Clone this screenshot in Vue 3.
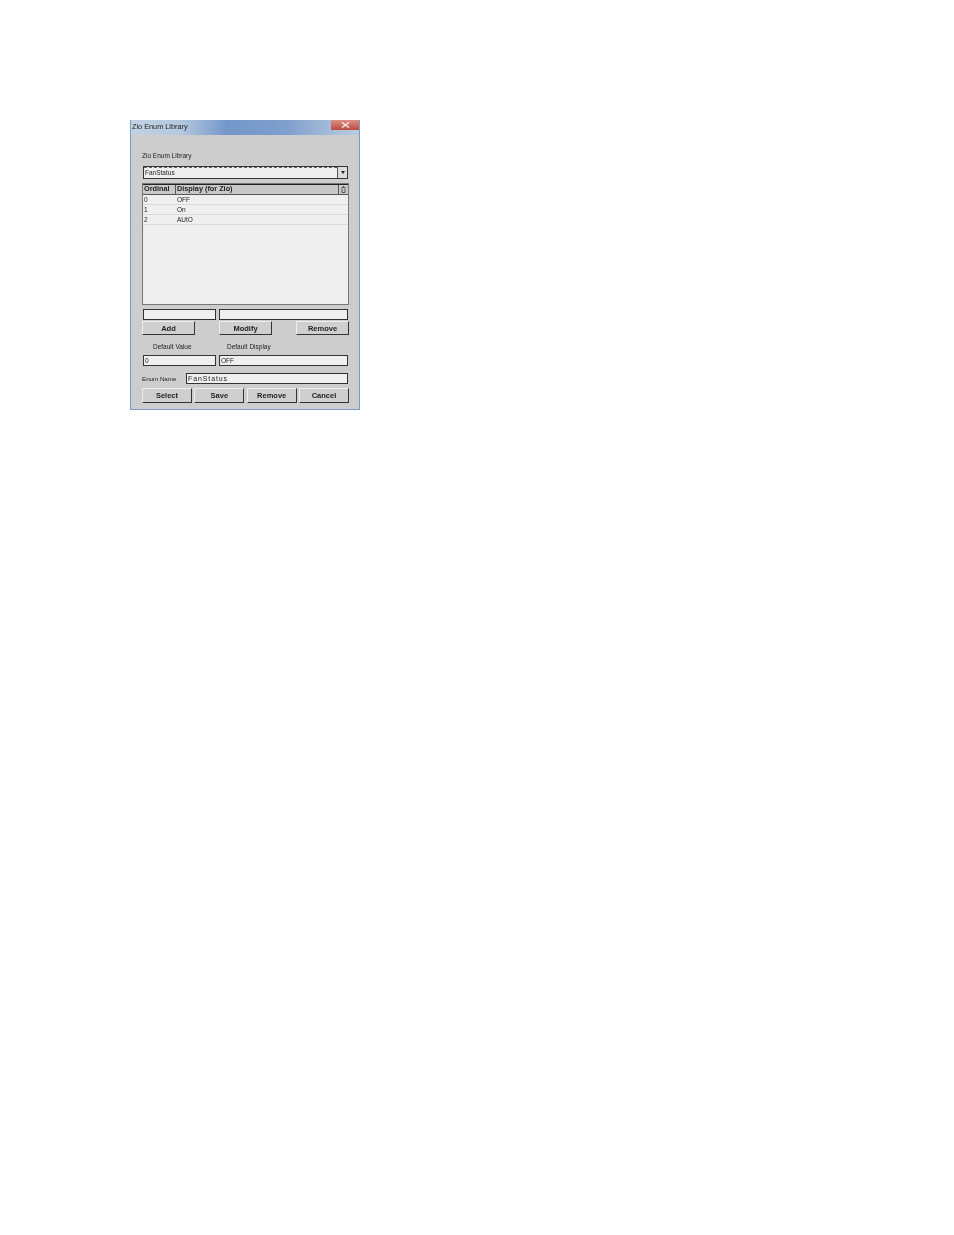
<template>
  <div class="page">
    <div class="dialog">
      <div class="titlebar">
        <span class="title">Zio Enum Library</span>
        <span class="close"><svg width="9" height="6" viewBox="0 0 9 6"><path d="M1 0.5L8 5.5M8 0.5L1 5.5" stroke="#f4e6e4" stroke-width="1.5" /></svg></span>
      </div>
      <div class="body">
        <div class="lib-label">Zio Enum Library</div>
        <div class="combo">
          <span class="combo-text">FanStatus</span>
          <span class="combo-btn"><i class="arrow"></i></span>
        </div>
        <div class="table">
          <div class="thead">
            <div class="th c1">Ordinal</div>
            <div class="th c2">Display (for Zio)</div>
            <div class="th c3"><svg width="5" height="7" viewBox="0 0 5 7"><path d="M0.5 1.5H4.5M1 2.5V6.5H4V2.5M2 0.5H3" fill="none" stroke="#555" stroke-width="1" /></svg></div>
          </div>
          <div v-for="r in rows" :key="r.ord" class="tr">
            <div class="td c1">{{ r.ord }}</div>
            <div class="td">{{ r.text }}</div>
          </div>
        </div>
        <div class="edit-row">
          <div class="field f-left"></div>
          <div class="field f-right"></div>
        </div>
        <div class="btn-row three">
          <button class="btn">Add</button>
          <button class="btn">Modify</button>
          <button class="btn">Remove</button>
        </div>
        <div class="default-labels">
          <span class="dl-1">Default Value</span>
          <span class="dl-2">Default Display</span>
        </div>
        <div class="edit-row">
          <div class="field f-left">0</div>
          <div class="field f-right">OFF</div>
        </div>
        <div class="name-row">
          <span class="name-label">Enum Name</span>
          <div class="field name-field">FanStatus</div>
        </div>
        <div class="btn-row four">
          <button v-for="b in actions" :key="b" class="btn">{{ b }}</button>
        </div>
      </div>
    </div>
  </div>
</template>

<script setup>
const rows = [
  { ord: '0', text: 'OFF' },
  { ord: '1', text: 'On' },
  { ord: '2', text: 'AUtO' },
]
const actions = ['Select', 'Save', 'Remove', 'Cancel']
</script>

<style scoped>
.page { padding: 120px 0 0 130px; height: 1115px; background: #fff; font-family: "Liberation Sans", Arial, sans-serif; font-size: 6.5px; color: #222; }
.dialog { width: 230px; height: 290px; box-sizing: border-box; border: 1px solid #7d9ac0; border-top: 0; background: #cdcdcd; display: flex; flex-direction: column; filter: blur(0.25px); }
.titlebar { height: 15px; display: flex; justify-content: space-between; background: linear-gradient(90deg, #c3d2e3 0%, #b4c8df 22%, #7497c9 42%, #7f9fcd 68%, #bccde1 100%); }
.title { font-size: 7.3px; line-height: 13px; padding-left: 1px; color: #222; }
.close { width: 28px; height: 10px; background: linear-gradient(#dc9086, #bd4a3e); display: flex; align-items: center; justify-content: center; }
.body { flex: 1; padding: 16px 11px 0 11px; }
.lib-label { line-height: 9px; margin-bottom: 6px; }
.combo { height: 13px; width: 205px; margin-left: 1px; box-sizing: border-box; border: 1px solid #333; background: #efefef; display: flex; justify-content: space-between; margin-bottom: 4px; }
.combo-text { line-height: 9px; padding-left: 1px; border-top: 1px dashed #666; flex: 1; }
.combo-btn { width: 9px; background: #ddd; border-left: 1px solid #555; display: flex; align-items: center; justify-content: center; }
.arrow { border: 2px solid transparent; border-top: 3px solid #222; border-bottom: 0; }
.table { height: 122px; width: 207px; box-sizing: border-box; border: 1px solid #777; background: #efefef; margin-bottom: 4px; }
.thead { display: flex; height: 11px; background: #c8c8c8; border-top: 1px solid #222; border-bottom: 1px solid #555; box-sizing: border-box; }
.th { font-weight: bold; font-size: 7.3px; line-height: 8px; padding-left: 1px; border-right: 1px solid #555; flex: 1; }
.th.c1, .td.c1 { width: 33px; flex: none; box-sizing: border-box; }
.th.c3 { width: 9px; flex: none; padding: 1px 0 0 2px; border: 0; box-sizing: border-box; }
.tr { display: flex; height: 10px; line-height: 9px; border-bottom: 1px solid #d8d8d8; box-sizing: border-box; }
.td { padding-left: 1px; }
.edit-row { display: flex; gap: 3px; width: 205px; margin-left: 1px; }
.field { height: 11px; box-sizing: border-box; border: 1px solid #333; background: #efefef; line-height: 9px; padding-left: 1px; }
.f-left { width: 73px; }
.f-right { flex: 1; }
.btn-row { display: flex; justify-content: space-between; width: 207px; margin-top: 1px; }
.btn { height: 14px; padding: 0; box-sizing: border-box; border: 1px solid #333; border-top-color: #eee; border-left-color: #eee; background: #cfcfcf; font: bold 7.5px "Liberation Sans", Arial, sans-serif; color: #222; }
.three .btn { width: 53px; }
.four { margin-top: 4px; }
.four .btn { width: 50px; height: 15px; }
.default-labels { display: flex; height: 10px; margin-top: 7px; margin-bottom: 3px; line-height: 9px; }
.dl-1 { margin-left: 11px; width: 74px; }
.name-row { display: flex; align-items: center; width: 206px; margin-top: 7px; }
.name-label { width: 44px; font-size: 6.2px; }
.name-field { flex: 1; font-size: 7px; letter-spacing: 0.9px; }
</style>
